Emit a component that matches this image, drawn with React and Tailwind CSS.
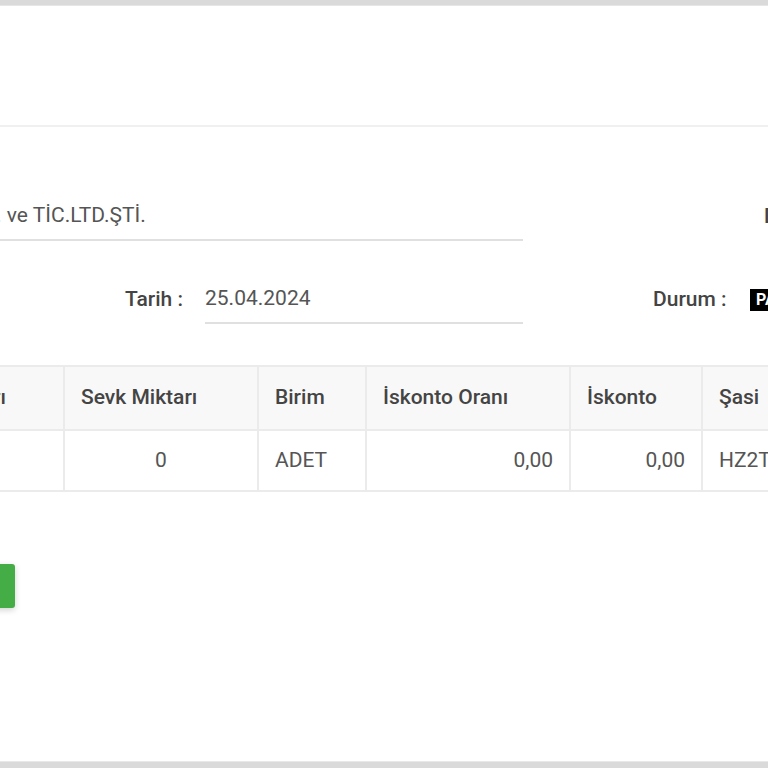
import React from "react";

const cols = [
  { w: "w-[200px]", pad: "pl-[5px] pr-[16px]", head: "Sipariş Miktarı", body: "", align: "text-left" },
  { w: "w-[194px]", pad: "px-[16px]", head: "Sevk Miktarı", body: "0", align: "text-center" },
  { w: "w-[108px]", pad: "px-[16px]", head: "Birim", body: "ADET", align: "text-left" },
  { w: "w-[204px]", pad: "px-[16px]", head: "İskonto Oranı", body: "0,00", align: "text-right" },
  { w: "w-[132px]", pad: "px-[16px]", head: "İskonto", body: "0,00", align: "text-right" },
  { w: "w-[220px]", pad: "px-[16px]", head: "Şasi", body: "HZ2T8842", align: "text-left" },
];

const App = () => {
  return (
    <div
      className="w-[768px] h-[768px] overflow-hidden bg-white flex flex-col"
      style={{ fontFamily: "Roboto, 'Liberation Sans', sans-serif" }}
    >
      {/* top frame */}
      <div className="h-[6px] shrink-0 bg-[#dadada] border-b border-[#e6e6e6]" />

      {/* header area */}
      <div className="h-[121px] shrink-0 border-b-2 border-[#f0f0f0]" />

      <div className="flex-1 flex flex-col">
        {/* row 1 */}
        <div className="flex items-center mt-[66px] whitespace-nowrap">
          <div className="w-[527px] h-[48px] shrink-0 border-b-2 border-[#e0e0e0] flex items-center text-[21px] text-[#555] ml-[-4px]">
            . ve TİC.LTD.ŞTİ.
          </div>
          <div className="ml-[241px] text-[21px] font-medium text-[#444]">Depo :</div>
        </div>

        {/* row 2 */}
        <div className="flex items-center mt-[34px] whitespace-nowrap">
          <div className="ml-[125px] w-[80px] shrink-0 text-[21px] font-medium text-[#444]">Tarih :</div>
          <div className="w-[318px] h-[49px] shrink-0 border-b-2 border-[#e0e0e0] flex items-center text-[21px] text-[#555]">
            25.04.2024
          </div>
          <div className="ml-[130px] w-[97px] shrink-0 text-[21px] font-medium text-[#444]">Durum :</div>
          <div className="h-[22px] px-[6px] shrink-0 bg-black text-white text-[16px] font-bold flex items-center">
            PASİF
          </div>
        </div>

        {/* table */}
        <div className="mt-[41px] ml-[-137px]">
          <table className="w-[1058px] table-fixed border-collapse whitespace-nowrap">
            <thead>
              <tr className="bg-[#f8f8f8] h-[64px]">
                {cols.map((c) => (
                  <th
                    key={c.head}
                    className={`${c.w} ${c.pad} border-2 border-[#ebebeb] text-left text-[21px] font-medium text-[#444]`}
                  >
                    {c.head}
                  </th>
                ))}
              </tr>
            </thead>
            <tbody>
              <tr className="h-[61px]">
                {cols.map((c) => (
                  <td
                    key={c.head}
                    className={`${c.w} ${c.align} px-[16px] border-2 border-[#ebebeb] text-[21px] text-[#555]`}
                  >
                    {c.body}
                  </td>
                ))}
              </tr>
            </tbody>
          </table>
        </div>

        {/* button */}
        <div className="mt-[72px] ml-[-65px]">
          <div className="w-[80px] h-[44px] bg-[#45ad45] rounded-[3px] shadow-[0_2px_6px_rgba(0,0,0,0.18)]" />
        </div>
      </div>

      {/* bottom frame */}
      <div className="h-[7px] shrink-0 bg-[#dadada] border-t border-[#e8e8e8]" />
    </div>
  );
};

export default App;
